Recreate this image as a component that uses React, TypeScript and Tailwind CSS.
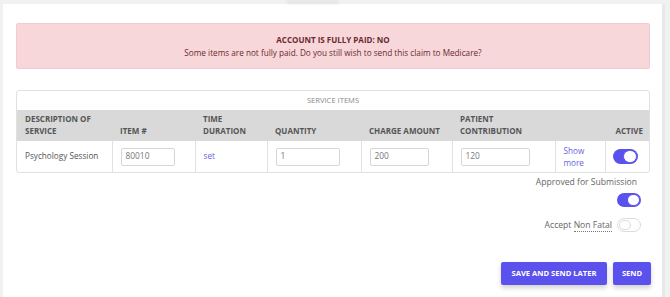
import React from "react";

function Toggle({ on, className = "" }: { on: boolean; className?: string }) {
  return (
    <div
      className={
        "relative rounded-full " +
        (on ? "bg-[#5b52ee]" : "bg-white border border-[#dcdcdc]") +
        " " +
        className
      }
    >
      <div
        className={
          "absolute top-[1px] rounded-full bg-white " +
          (on ? "right-[1px] border border-[#5b52ee]" : "left-[1px] border border-[#dcdcdc]")
        }
        style={{ width: "calc(100% - 50% + 1px)", height: "calc(100% - 2px)" }}
      />
    </div>
  );
}

export default function App() {
  const th = "align-bottom text-left font-bold px-[8px] pb-[4px] pt-[3px] leading-[12px]";
  const td = "border-r border-[#e2e2e2] px-[8px] align-middle";
  const input =
    "h-[18px] border border-[#d6d6d6] rounded-[2px] px-[4px] text-[8.4px] text-[#777] flex items-center bg-white";
  return (
    <div
      className="h-[297px] w-[670px] overflow-hidden bg-[#f1f1f1] flex"
      style={{ fontFamily: '"Open Sans", "Noto Sans", sans-serif' }}
    >
      <div className="w-[3px] shrink-0" />
      <div className="relative mt-[4px] w-[659px] shrink-0 bg-white pl-[13px] pr-[12px] pt-[19px] text-[#555]">
        <div className="absolute -top-[4px] left-[284px] h-[4px] w-[52px] bg-[#e6e6e6] blur-[1px]" />
        <div className="h-[46px] rounded-[2px] bg-[#f7d7da] border border-[#f3cbd0] flex flex-col items-center justify-center text-[#6b2a30] text-[8.2px] leading-[13px]">
          <div className="font-bold text-[8px]">ACCOUNT IS FULLY PAID: NO</div>
          <div>Some items are not fully paid. Do you still wish to send this claim to Medicare?</div>
        </div>

        <div className="mt-[21px] w-[634px] border border-[#e0e0e0] rounded-[3px] overflow-hidden">
          <div className="h-[19px] flex items-center justify-center text-[7.6px] text-[#888]">
            SERVICE ITEMS
          </div>
          <table className="w-full table-fixed border-collapse text-[8.2px]">
            <colgroup>
              <col style={{ width: 95 }} />
              <col style={{ width: 83 }} />
              <col style={{ width: 72 }} />
              <col style={{ width: 94 }} />
              <col style={{ width: 91 }} />
              <col style={{ width: 103 }} />
              <col style={{ width: 50 }} />
              <col style={{ width: 46 }} />
            </colgroup>
            <thead>
              <tr className="h-[31px] bg-[#d9d9d9] text-[#555] text-[8px]">
                <th className={th}>
                  DESCRIPTION OF
                  <br />
                  SERVICE
                </th>
                <th className={th}>ITEM #</th>
                <th className={th}>
                  TIME
                  <br />
                  DURATION
                </th>
                <th className={th}>QUANTITY</th>
                <th className={th}>CHARGE AMOUNT</th>
                <th className={th}>
                  PATIENT
                  <br />
                  CONTRIBUTION
                </th>
                <th className={th}></th>
                <th className={th + " text-right pr-[8px]"}>ACTIVE</th>
              </tr>
            </thead>
            <tbody>
              <tr className="h-[31px] text-[#555]">
                <td className={td}>Psychology Session</td>
                <td className={td}>
                  <div className={input + " w-[54px]"}>80010</div>
                </td>
                <td className={td + " text-[#6a5fe0]"}>set</td>
                <td className={td}>
                  <div className={input + " w-[64px]"}>1</div>
                </td>
                <td className={td}>
                  <div className={input + " w-[59px]"}>200</div>
                </td>
                <td className={td}>
                  <div className={input + " w-[69px]"}>120</div>
                </td>
                <td className={td + " text-[#6a5fe0] leading-[12px]"}>
                  Show
                  <br />
                  more
                </td>
                <td className="px-[7px] align-middle">
                  <Toggle on className="w-[25px] h-[15px]" />
                </td>
              </tr>
            </tbody>
          </table>
        </div>

        <div className="w-[625px] flex flex-col items-end text-[8.6px] text-[#666]">
          <div className="mt-[3px] mr-[4px] leading-[12px]">Approved for Submission</div>
          <Toggle on className="mt-[5px] w-[24px] h-[14px]" />
          <div className="mt-[11px] flex items-center gap-[5px]">
            <span className="leading-[12px]">
              Accept <span className="border-b border-dotted border-[#777]">Non Fatal</span>
            </span>
            <Toggle on={false} className="w-[24px] h-[14px]" />
          </div>
        </div>

        <div className="mt-[30px] w-[635px] flex justify-end gap-[6px]">
          <button className="h-[23px] w-[106px] rounded-[2px] bg-[#5b52ee] text-white text-[7.6px] font-bold shadow-[0_3px_5px_rgba(0,0,0,0.18)]">
            SAVE AND SEND LATER
          </button>
          <button className="h-[23px] w-[38px] rounded-[2px] bg-[#5b52ee] text-white text-[7.6px] font-bold shadow-[0_3px_5px_rgba(0,0,0,0.18)]">
            SEND
          </button>
        </div>
      </div>
      <div className="w-[3px] shrink-0 mt-[4px] bg-[#e8e8e8]" />
    </div>
  );
}
